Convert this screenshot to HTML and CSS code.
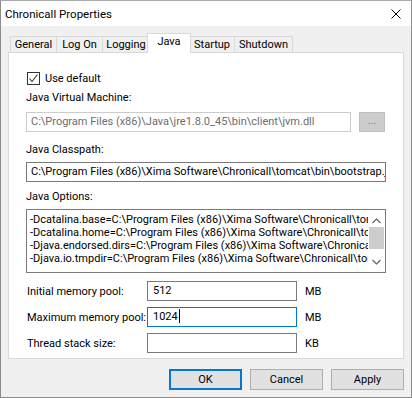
FILE: index.html
```html
<!DOCTYPE html>
<html lang="en">
<head>
    <meta charset="UTF-8">
    <title>Chronicall Properties</title>
    <link rel="stylesheet" href="styles.css">
</head>
<body>
<div class="window">
    <div class="titlebar">
        <span class="title">Chronicall Properties</span>
        <svg class="close" width="10" height="10" viewBox="0 0 10 10"><path d="M0.5 0.5 L9.5 9.5 M9.5 0.5 L0.5 9.5" stroke="#000" stroke-width="1" fill="none"/></svg>
    </div>
    <div class="body">
        <div class="tabs">
            <div class="tab" style="width:47px">General</div>
            <div class="tab" style="width:47px">Log On</div>
            <div class="tab" style="width:48px">Logging</div>
            <div class="tab active" style="width:44px">Java</div>
            <div class="tab" style="width:46px">Startup</div>
            <div class="tab" style="width:59px">Shutdown</div>
        </div>
        <div class="panel">
            <div class="check-row">
                <span class="checkbox"><svg width="11" height="11" viewBox="0 0 11 11"><path d="M1.5 5.5 L4 8.5 L9.5 1.5" stroke="#333" stroke-width="1.1" fill="none"/></svg></span>
                <span>Use default</span>
            </div>
            <div class="label l-jvm">Java Virtual Machine:</div>
            <div class="jvm-row">
                <div class="field disabled jvm">C:\Program Files (x86)\Java\jre1.8.0_45\bin\client\jvm.dll</div>
                <div class="browse">...</div>
            </div>
            <div class="label l-cp">Java Classpath:</div>
            <div class="field classpath">C:\Program Files (x86)\Xima Software\Chronicall\tomcat\bin\bootstrap.jar</div>
            <div class="label l-opt">Java Options:</div>
            <div class="options">
                <div class="opt-text">
                    <div>-Dcatalina.base=C:\Program Files (x86)\Xima Software\Chronicall\tomcat</div>
                    <div>-Dcatalina.home=C:\Program Files (x86)\Xima Software\Chronicall\tomcat</div>
                    <div>-Djava.endorsed.dirs=C:\Program Files (x86)\Xima Software\Chronicall</div>
                    <div>-Djava.io.tmpdir=C:\Program Files (x86)\Xima Software\Chronicall\tomcat</div>
                </div>
                <div class="scrollbar">
                    <svg class="arrow" width="9" height="6" viewBox="0 0 9 6"><path d="M0.5 5 L4.5 1 L8.5 5" stroke="#606060" stroke-width="1.2" fill="none"/></svg>
                    <div class="thumb"></div>
                    <svg class="arrow down" width="9" height="6" viewBox="0 0 9 6"><path d="M0.5 1 L4.5 5 L8.5 1" stroke="#606060" stroke-width="1.2" fill="none"/></svg>
                </div>
            </div>
            <div class="mem-row first">
                <span class="mem-label">Initial memory pool:</span>
                <div class="field mem">512</div>
                <span class="unit">MB</span>
            </div>
            <div class="mem-row">
                <span class="mem-label">Maximum memory pool:</span>
                <div class="field mem focus">1024<span class="caret"></span></div>
                <span class="unit">MB</span>
            </div>
            <div class="mem-row">
                <span class="mem-label">Thread stack size:</span>
                <div class="field mem"></div>
                <span class="unit">KB</span>
            </div>
        </div>
        <div class="buttons">
            <div class="btn default">OK</div>
            <div class="btn">Cancel</div>
            <div class="btn">Apply</div>
        </div>
    </div>
</div>
</body>
</html>
```

FILE: styles.css
```css
body { margin: 0; font-family: Roboto, "Noto Sans", "Liberation Sans", sans-serif; font-size: 11px; color: #000; }
.window { width: 412px; height: 398px; box-sizing: border-box; border: 1px solid #8c8c8c; border-top-color: #aaa; display: flex; flex-direction: column; background: #f0f0f0; }
.titlebar { height: 25px; background: #fff; display: flex; align-items: center; justify-content: space-between; padding: 0 10px 0 4px; }
.title { font-size: 11.5px; line-height: 16px; }
.close { display: block; }
.body { flex: 1; display: flex; flex-direction: column; padding: 7px 7px 0 7px; }

.tabs { display: flex; align-items: flex-end; padding-left: 2px; height: 19px; position: relative; z-index: 1; }
.tab { height: 16px; box-sizing: border-box; border: 1px solid #d9d9d9; border-bottom: none; background: #f0f0f0; text-align: center; line-height: 15px; margin-left: -1px; white-space: nowrap; }
.tab:first-child { margin-left: 0; }
.tab.active { height: 20px; background: #fff; margin: 0 -2px -1px -3px; line-height: 16px; padding-bottom: 3px; position: relative; z-index: 2; border-color: #d9d9d9; }
.tab.active + .tab { margin-left: 0; }

.panel { background: #fff; border: 1px solid #d9d9d9; height: 307px; box-sizing: border-box; padding: 0 18px 0 17px; display: flex; flex-direction: column; }

.check-row { display: flex; align-items: center; gap: 5px; margin-top: 19px; height: 13px; line-height: 16px; padding-left: 1px; }
.checkbox { width: 13px; height: 13px; box-sizing: border-box; border: 1px solid #333; display: flex; align-items: center; justify-content: center; }
.checkbox svg { display: block; }

.label { line-height: 16px; height: 16px; white-space: nowrap; }
.l-jvm { margin-top: 5px; }
.l-cp { margin-top: 10px; }
.l-opt { margin-top: 7px; }

.field { height: 20px; box-sizing: border-box; border: 1px solid #7a7a7a; background: #fff; padding: 0 4px; line-height: 18px; white-space: nowrap; overflow: hidden; }
.field.disabled { border-color: #cccccc; color: #6d6d6d; }
.jvm-row { display: flex; gap: 8px; margin-top: 6px; }
.jvm { width: 327px; }
.browse { width: 26px; height: 20px; box-sizing: border-box; background: #cccccc; border: 1px solid #bfbfbf; color: #838383; text-align: center; line-height: 16px; }
.classpath { margin-top: 4px; width: 360px; }

.options { margin-top: 4px; width: 360px; height: 64px; box-sizing: border-box; border: 1px solid #7a7a7a; display: flex; }
.opt-text { flex: 1; overflow: hidden; white-space: nowrap; padding: 3px 0 0 3px; line-height: 13px; }
.scrollbar { width: 17px; display: flex; flex-direction: column; align-items: center; background: #fff; }
.arrow { display: block; margin-top: 8px; }
.arrow.down { margin-top: 10px; }
.thumb { width: 15px; height: 22px; background: #cdcdcd; margin-top: 3px; }

.mem-row { display: flex; align-items: center; margin-top: 6px; }
.mem-row.first { margin-top: 8px; }
.mem-label { width: 120px; padding-left: 1px; white-space: nowrap; }
.mem { width: 150px; padding-left: 5px; }
.mem.focus { border-color: #0078d7; }
.caret { display: inline-block; width: 1px; height: 14px; background: #000; vertical-align: -3px; margin-left: 1px; }
.unit { margin-left: 8px; }

.buttons { display: flex; justify-content: flex-end; gap: 8px; margin-top: 10px; padding-right: 0; }
.btn { width: 73px; height: 21px; box-sizing: border-box; border: 1px solid #adadad; background: #e1e1e1; text-align: center; line-height: 19px; }
.btn.default { border: 2px solid #0078d7; line-height: 17px; }
```
